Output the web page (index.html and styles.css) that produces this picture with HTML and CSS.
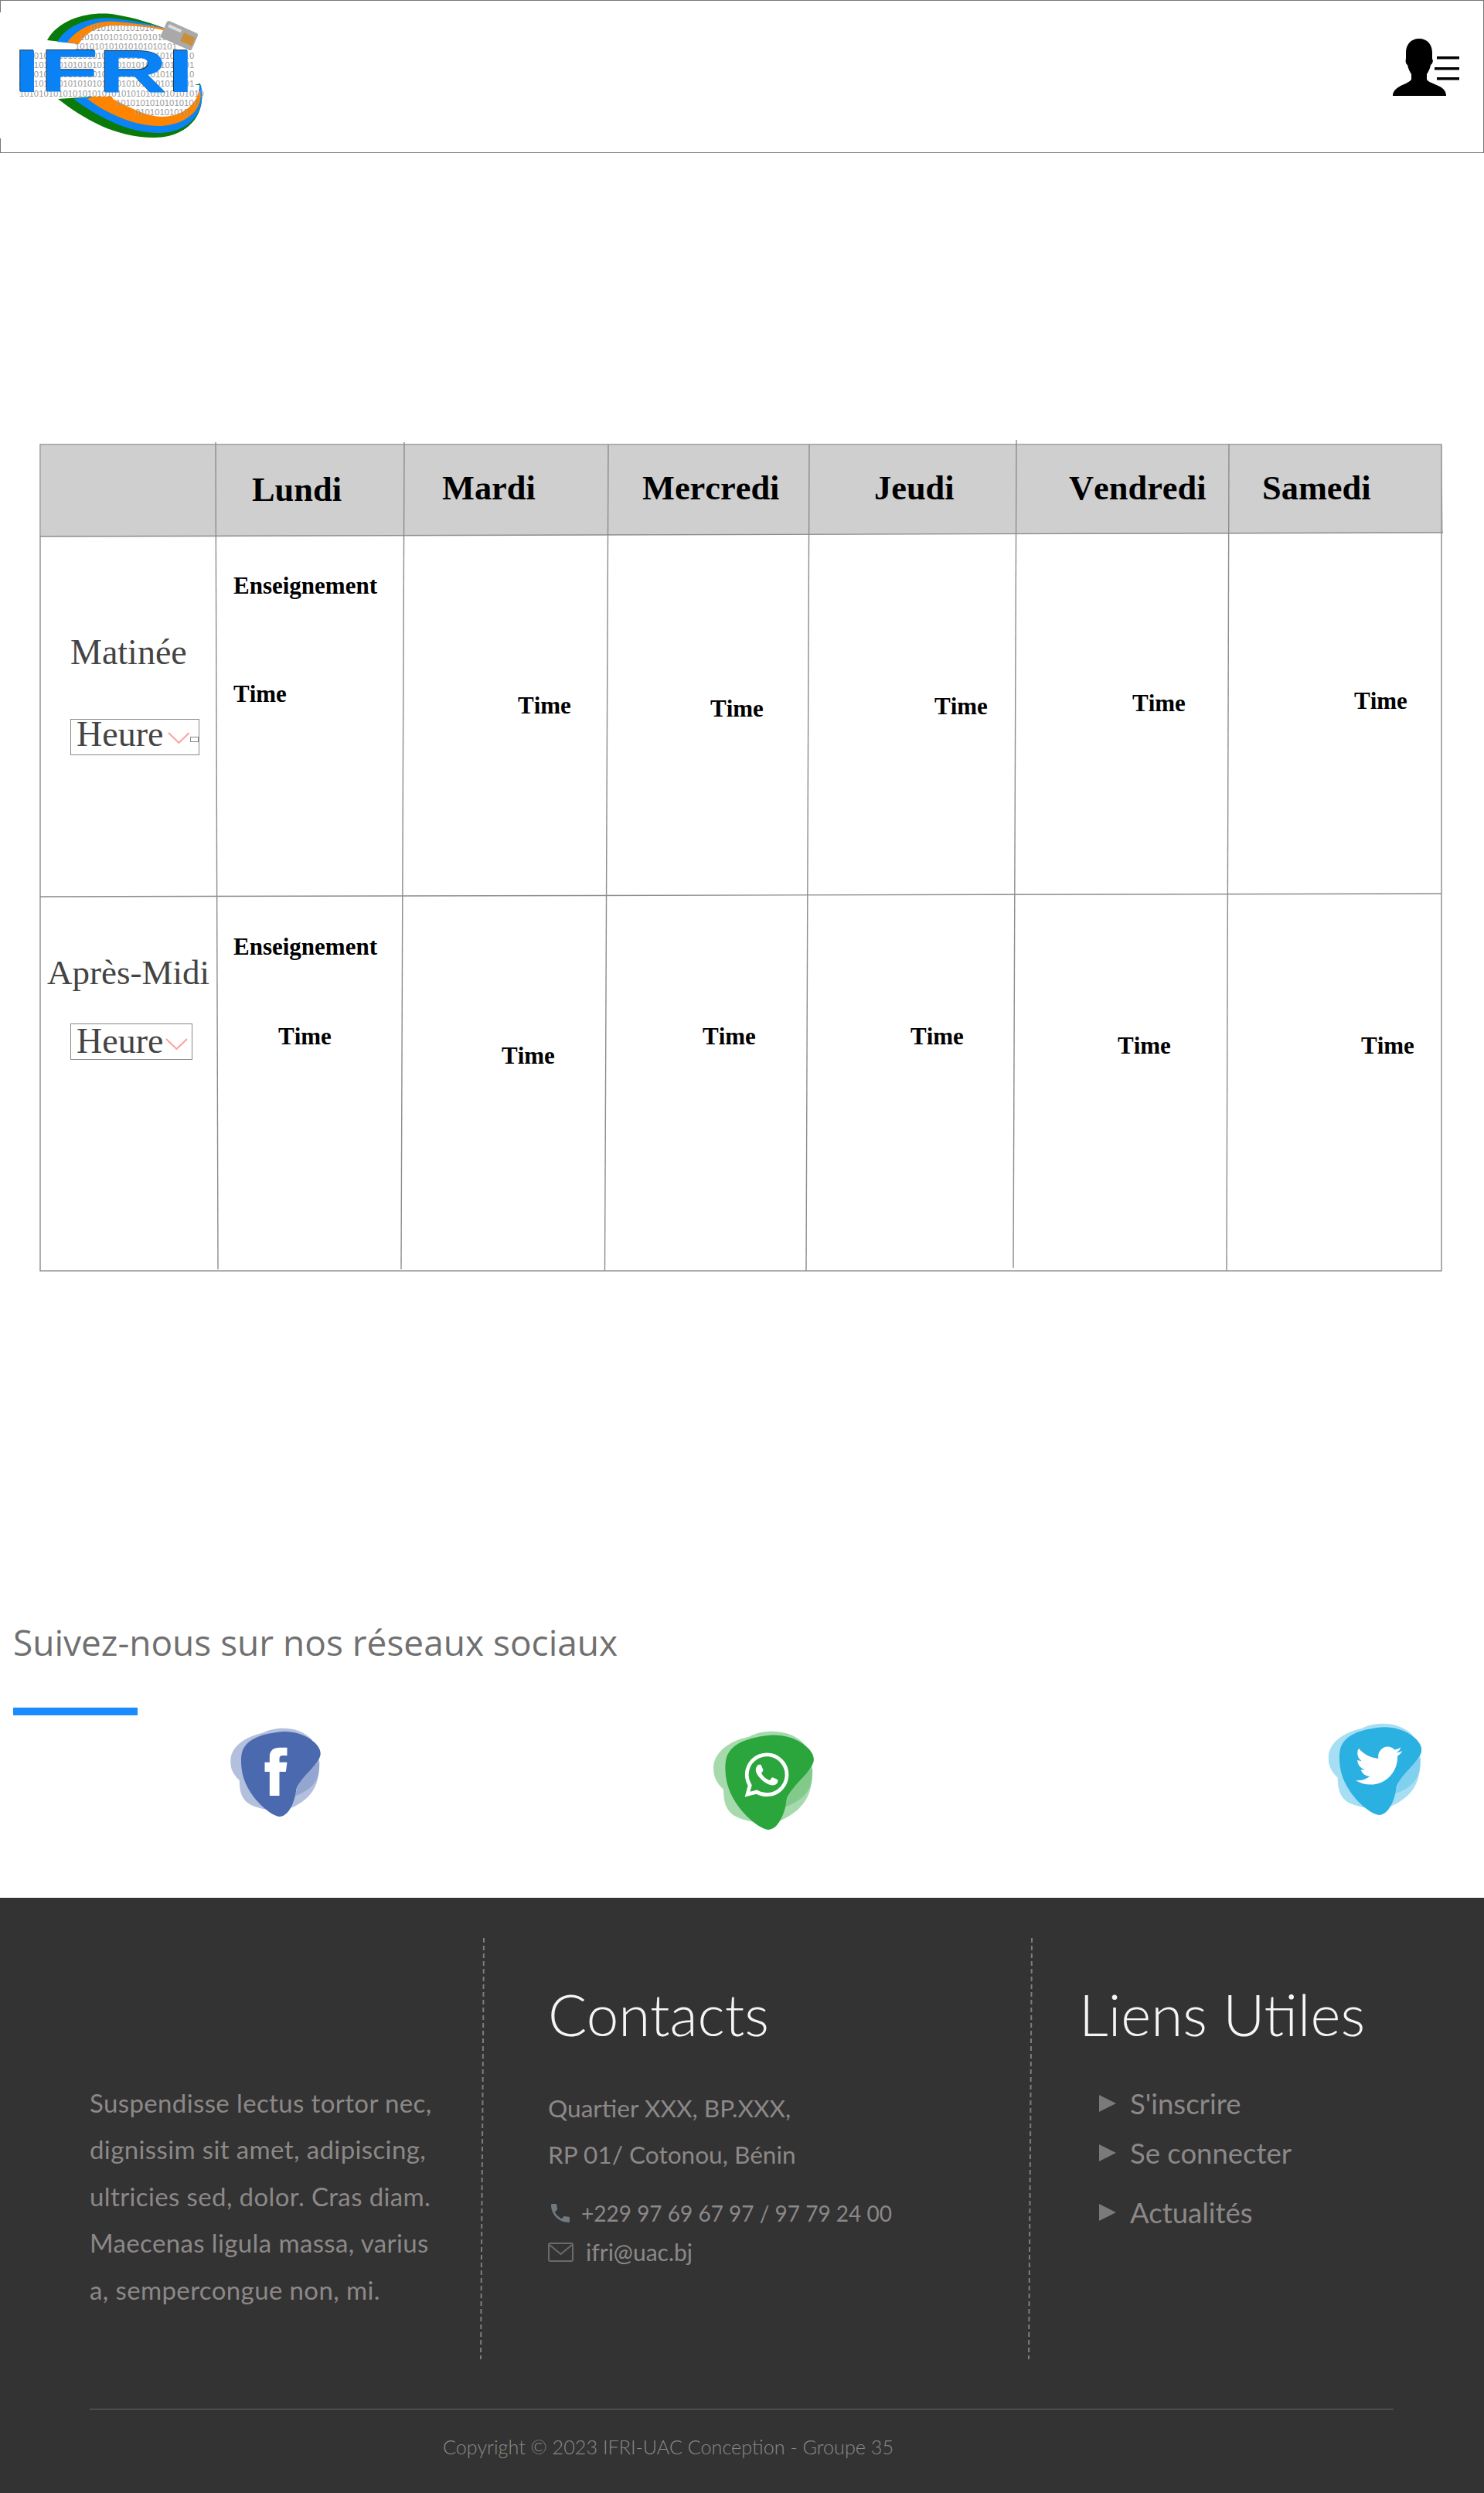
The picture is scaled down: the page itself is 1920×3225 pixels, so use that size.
FILE: index.html
```html
<!DOCTYPE html>
<html lang="fr">
<head>
  <meta charset="UTF-8">
  <meta name="viewport" content="width=device-width, initial-scale=1.0">
  <title>Emploi du temps - IFRI</title>
  <link rel="stylesheet" href="styles.css">
</head>
<body>

<svg class="defs" width="0" height="0">
  <symbol id="blob" viewBox="0 0 350 345">
    <path opacity="0.42" d="M0 130C0 75 55 35 125 20C170-5 265-10 315 45L345 130C345 200 335 260 250 305C200 330 130 322 80 300C40 280 35 240 35 205C10 180 0 160 0 130Z"/>
    <path opacity="0.3" d="M275 185L345 130C350 200 320 240 250 265Z"/>
    <path d="M45 95C60 45 120 22 205 15C280 12 350 60 350 100C350 140 270 190 255 240C250 290 225 345 190 345C150 340 60 260 45 170C40 140 40 115 45 95Z"/>
  </symbol>
</svg>

<header class="topbar">
  <svg class="logo" viewBox="0 16 280 163" width="280" height="163">
    <rect x="0" y="16" width="280" height="163" fill="#fff"/>
    <path fill="#0a7a0a" d="M61 52C78 22 120 14 150 19C175 23 195 30 215 37L150 62Z"/>
    <path fill="#0a84f5" d="M74 54C88 30 122 20 150 24C175 27 195 31 215 37L150 62Z"/>
    <path fill="#ff8400" d="M87 55C100 36 125 26 150 28C175 30 195 33 215 37L150 62Z"/>
    <path fill="#fff" d="M102 57C112 40 130 33 150 33C175 33 195 35 215 40L215 70L110 70Z"/>
    <path fill="#0a7a0a" d="M75 128C110 155 150 178 200 178C240 178 270 150 259 108L200 125L120 125Z"/>
    <path fill="#0a84f5" d="M95 128C125 150 165 172 205 172C240 172 268 150 260 110L200 125L120 125Z"/>
    <path fill="#ff8400" d="M113 128C140 148 175 163 205 163C235 163 264 145 259 118L200 125L120 125Z"/>
    <path fill="#fff" d="M146 128C170 140 190 151 210 151C235 151 258 135 258 110L200 110L140 110Z"/>
    <g class="bits">
      <text x="118" y="40">0101010101010</text>
      <text x="103" y="52">101010101010101010</text>
      <text x="97" y="64">101010101010101010101</text>
      <text x="25" y="76">101010101010101010101010101010101010</text>
      <text x="25" y="88">010101010101010101010101010101010101</text>
      <text x="25" y="100">101010101010101010101010101010101010</text>
      <text x="25" y="112">010101010101010101010101010101010101</text>
      <text x="25" y="125">10101010101010101010101010101010101010</text>
      <text x="150" y="137">10101010101010101</text>
      <text x="175" y="149">01010101010</text>
    </g>
    <g transform="rotate(24 232 46)">
      <rect x="210" y="34" width="44" height="24" rx="3" fill="#a9a9a9"/>
      <rect x="236" y="40" width="16" height="12" fill="#c98f3a"/>
      <rect x="214" y="38" width="18" height="4" fill="#dcdcdc"/>
    </g>
    <text class="logo-name" x="18" y="119" textLength="233" lengthAdjust="spacingAndGlyphs">IFRI</text>
  </svg>
  <svg class="user-menu" viewBox="0 0 90 78" width="90" height="78">
    <path d="M36 2C47 2 53 10 53 20L53 28C55 31 53 35 51 36C50 42 47 46 46 48L46 55C50 60 60 61 66 66C70 69 71 73 71 76L2 76C2 72 4 68 9 65C14 61 22 60 26 55L26 48C24 45 22 41 21 36C19 35 18 31 19 28L19 20C19 10 25 2 36 2Z"/>
    <rect x="59" y="25" width="29" height="3.5"/>
    <rect x="56" y="39" width="32" height="3.5"/>
    <rect x="59" y="52" width="29" height="3.5"/>
  </svg>
</header>

<main class="planning">
  <div class="schedule">
    <svg class="schedule-lines" viewBox="40 560 1840 1095" width="1840" height="1095">
      <polygon fill="#cfcfcf" points="53,576 1865,576 1867,689 53,694"/>
      <g stroke="#8c8c8c" stroke-width="1.4" fill="none">
        <rect x="52" y="575" width="1813" height="1069"/>
        <line x1="52" y1="694" x2="1867" y2="689"/>
        <line x1="52" y1="1160" x2="1865" y2="1156"/>
        <line x1="279" y1="572" x2="282" y2="1642"/>
        <line x1="523" y1="572" x2="519" y2="1642"/>
        <line x1="787" y1="575" x2="782.5" y2="1644"/>
        <line x1="1047" y1="575" x2="1043" y2="1644"/>
        <line x1="1315" y1="569" x2="1311" y2="1640"/>
        <line x1="1590" y1="574" x2="1587" y2="1644"/>
      </g>
    </svg>

    <div></div>
    <div class="day d-lundi">Lundi</div>
    <div class="day d-mardi">Mardi</div>
    <div class="day d-mercredi">Mercredi</div>
    <div class="day d-jeudi">Jeudi</div>
    <div class="day d-vendredi">Vendredi</div>
    <div class="day d-samedi">Samedi</div>

    <div class="period p-matin">
      <div class="period-name">Matinée</div>
      <div class="hour-select hs-matin">
        <span>Heure</span>
        <svg class="chevron" viewBox="0 0 29 15" width="29" height="15"><polyline points="1,1 14.5,14 28,1"/></svg>
        <i class="hs-handle"></i>
      </div>
    </div>
    <div class="slot s-lundi-1"><div class="course">Enseignement</div><div class="time">Time</div></div>
    <div class="slot s-mardi-1"><div class="time">Time</div></div>
    <div class="slot s-mercredi-1"><div class="time">Time</div></div>
    <div class="slot s-jeudi-1"><div class="time">Time</div></div>
    <div class="slot s-vendredi-1"><div class="time">Time</div></div>
    <div class="slot s-samedi-1"><div class="time">Time</div></div>

    <div class="period p-aprem">
      <div class="period-name">Après-Midi</div>
      <div class="hour-select hs-aprem">
        <span>Heure</span>
        <svg class="chevron" viewBox="0 0 29 15" width="29" height="15"><polyline points="1,1 14.5,14 28,1"/></svg>
      </div>
    </div>
    <div class="slot s-lundi-2"><div class="course">Enseignement</div><div class="time">Time</div></div>
    <div class="slot s-mardi-2"><div class="time">Time</div></div>
    <div class="slot s-mercredi-2"><div class="time">Time</div></div>
    <div class="slot s-jeudi-2"><div class="time">Time</div></div>
    <div class="slot s-vendredi-2"><div class="time">Time</div></div>
    <div class="slot s-samedi-2"><div class="time">Time</div></div>
  </div>
</main>

<section class="social">
  <h2 class="social-title">Suivez-nous sur nos réseaux sociaux</h2>
  <div class="social-bar"></div>
  <div class="social-icons">
    <svg class="soc soc-fb" viewBox="0 0 350 345" width="117" height="115">
      <use href="#blob"/>
      <path fill="#fff" d="M152 264V171H133V134H152V112C152 88 168 77 190 77H220V108H202C194 108 190 112 190 120V134H220L215 171H190V264Z"/>
    </svg>
    <svg class="soc soc-wa" viewBox="0 0 350 345" width="132" height="128">
      <use href="#blob"/>
      <path transform="translate(109 77) scale(6.4)" fill="#fff" d="M17.472 14.382c-.297-.149-1.758-.867-2.03-.967-.273-.099-.471-.148-.67.15-.197.297-.767.966-.94 1.164-.173.199-.347.223-.644.075-.297-.15-1.255-.463-2.39-1.475-.883-.788-1.48-1.761-1.653-2.059-.173-.297-.018-.458.13-.606.134-.133.298-.347.446-.52.149-.174.198-.298.298-.497.099-.198.05-.371-.025-.52-.075-.149-.669-1.612-.916-2.207-.242-.579-.487-.5-.669-.51-.173-.008-.371-.01-.57-.01-.198 0-.52.074-.792.372-.272.297-1.04 1.016-1.04 2.479 0 1.462 1.065 2.875 1.213 3.074.149.198 2.096 3.2 5.077 4.487.709.306 1.262.489 1.694.625.712.227 1.36.195 1.871.118.571-.085 1.758-.719 2.006-1.413.248-.694.248-1.289.173-1.413-.074-.124-.272-.198-.57-.347m-5.421 7.403h-.004a9.87 9.87 0 01-5.031-1.378l-.361-.214-3.741.982.998-3.648-.235-.374a9.86 9.86 0 01-1.51-5.26c.001-5.45 4.436-9.884 9.888-9.884 2.64 0 5.122 1.03 6.988 2.898a9.825 9.825 0 012.893 6.994c-.003 5.45-4.437 9.884-9.885 9.884m8.413-18.297A11.815 11.815 0 0012.05 0C5.495 0 .16 5.335.157 11.892c0 2.096.547 4.142 1.588 5.945L.057 24l6.305-1.654a11.882 11.882 0 005.683 1.448h.005c6.554 0 11.89-5.335 11.893-11.893a11.821 11.821 0 00-3.48-8.413z"/>
    </svg>
    <svg class="soc soc-tw" viewBox="0 0 350 345" width="124" height="119">
      <use href="#blob"/>
      <path transform="translate(102 72) scale(7.3)" fill="#fff" d="M23.95 4.57a10 10 0 01-2.825.775 4.958 4.958 0 002.163-2.723c-.951.555-2.005.959-3.127 1.184a4.92 4.92 0 00-8.384 4.482C7.69 8.095 4.067 6.13 1.64 3.162a4.822 4.822 0 00-.666 2.475c0 1.71.87 3.213 2.188 4.096a4.904 4.904 0 01-2.228-.616v.06a4.923 4.923 0 003.946 4.827 4.996 4.996 0 01-2.212.085 4.936 4.936 0 004.604 3.417 9.867 9.867 0 01-6.102 2.105c-.39 0-.779-.023-1.17-.067a13.995 13.995 0 007.557 2.209c9.053 0 13.998-7.496 13.998-13.985 0-.21 0-.42-.015-.63A9.935 9.935 0 0024 4.59z"/>
    </svg>
  </div>
</section>

<footer class="footer">
  <div class="footer-cols">
    <div class="foot-about">
      <p>Suspendisse lectus tortor nec,<br>dignissim sit amet, adipiscing,<br>ultricies sed, dolor. Cras diam.<br>Maecenas ligula massa, varius<br>a, sempercongue non, mi.</p>
    </div>
    <div class="foot-divider"></div>
    <div class="foot-contacts">
      <h3>Contacts</h3>
      <p class="address">Quartier XXX, BP.XXX,<br>RP 01/ Cotonou, Bénin</p>
      <div class="contact-line phone">
        <svg viewBox="0 0 24 24" width="32" height="32"><path d="M6.6 10.8c1.4 2.8 3.8 5.1 6.6 6.6l2.2-2.2c.3-.3.7-.4 1-.2 1.1.4 2.3.6 3.6.6.6 0 1 .4 1 1V20c0 .6-.4 1-1 1C10.6 21 3 13.4 3 4c0-.6.4-1 1-1h3.5c.6 0 1 .4 1 1 0 1.3.2 2.5.6 3.6.1.3 0 .7-.2 1z"/></svg>
        <span>+229 97 69 67 97 / 97 79 24 00</span>
      </div>
      <div class="contact-line mail">
        <svg viewBox="0 0 33 25" width="33" height="25"><rect x="1" y="1" width="31" height="23" rx="2"/><polyline points="2,3 16.5,15 31,3"/></svg>
        <span>ifri@uac.bj</span>
      </div>
    </div>
    <div class="foot-divider"></div>
    <div class="foot-links">
      <h3>Liens Utiles</h3>
      <ul>
        <li class="l-inscrire">S'inscrire</li>
        <li class="l-connecter">Se connecter</li>
        <li class="l-actu">Actualités</li>
      </ul>
    </div>
  </div>
  <div class="foot-rule"></div>
  <p class="copyright">Copyright © 2023 IFRI-UAC Conception - Groupe 35</p>
</footer>

</body>
</html>
```

FILE: styles.css
```css
html, body {
  margin: 0;
  padding: 0;
  background-color: #ffffff;
}
body {
  width: 1920px;
  font-family: "Lato", "Open Sans", sans-serif;
}
.defs {
  position: absolute;
}

/* top bar */
.topbar {
  display: flex;
  justify-content: space-between;
  align-items: flex-start;
  height: 198px;
  box-sizing: border-box;
  border: 1px solid #777;
}
.logo {
  margin: 15px 0 0 -1px;
}
.bits text {
  font-family: "Liberation Sans", sans-serif;
  font-size: 11.3px;
  fill: #9a9a9a;
}
.logo-name {
  font-family: "Liberation Sans", sans-serif;
  font-weight: bold;
  font-size: 78px;
  fill: #0a82f5;
  filter: drop-shadow(-1px -1px 0 #23384f);
}
.user-menu {
  margin: 47px 29px 0 0;
}

/* planning table */
.planning {
  padding: 377px 0 0 52px;
}
.schedule {
  position: relative;
  display: grid;
  grid-template-columns: 227px 244px 264px 260px 268px 275px 275px;
  grid-template-rows: 118px 467px 484px;
  width: 1813px;
  font-family: "Liberation Serif", serif;
  font-kerning: none;
  color: #000;
}
.schedule-lines {
  position: absolute;
  left: -12px;
  top: -15px;
}
.schedule > div {
  position: relative;
  box-sizing: border-box;
}
.day {
  font-weight: bold;
  font-size: 44.4px;
  line-height: 50px;
  padding-top: 31px;
}
.d-lundi { padding: 33px 0 0 47px; }
.d-mardi { padding-left: 49px; }
.d-mercredi { padding-left: 44px; }
.d-jeudi { padding-left: 84px; }
.d-vendredi { padding-left: 68px; }
.d-samedi { padding-left: 43px; }

.period {
  color: #444;
}
.period-name {
  font-size: 46px;
  line-height: 52px;
}
.p-matin { padding: 125px 0 0 39px; }
.p-aprem { padding: 72px 0 0 9px; }
.p-aprem .period-name { font-size: 45px; }

.hour-select {
  display: flex;
  align-items: flex-start;
  box-sizing: border-box;
  height: 47px;
  border: 1px solid #888;
  font-size: 46px;
  line-height: 37px;
  padding-left: 7px;
}
.hs-matin {
  width: 167px;
  margin-top: 60px;
}
.hs-aprem {
  width: 158px;
  margin: 40px 0 0 30px;
}
.chevron {
  fill: none;
  stroke: #ff9e9e;
  stroke-width: 2;
  margin: 16px 0 0 6px;
}
.hs-aprem span {
  padding-top: 3px;
}
.hs-aprem .chevron {
  margin: 18px 0 0 3px;
}
.hs-handle {
  box-sizing: border-box;
  width: 11px;
  height: 7px;
  margin-top: 22px;
  border: 1px solid #888;
}

.course, .time {
  font-weight: bold;
  font-size: 31px;
  line-height: 36px;
}
.s-lundi-1 { padding: 47px 0 0 23px; }
.s-lundi-1 .time { margin-top: 104px; }
.s-mardi-1 { padding: 202px 0 0 147px; }
.s-mercredi-1 { padding: 206px 0 0 132px; }
.s-jeudi-1 { padding: 203px 0 0 162px; }
.s-vendredi-1 { padding: 199px 0 0 150px; }
.s-samedi-1 { padding: 196px 0 0 162px; }
.s-lundi-2 { padding: 47px 0 0 23px; }
.s-lundi-2 .time { margin: 80px 0 0 58px; }
.s-mardi-2 { padding: 188px 0 0 126px; }
.s-mercredi-2 { padding: 163px 0 0 122px; }
.s-jeudi-2 { padding: 163px 0 0 131px; }
.s-vendredi-2 { padding: 175px 0 0 131px; }
.s-samedi-2 { padding: 175px 0 0 171px; }

/* social */
.social {
  padding: 450px 0 0 17px;
  height: 811px;
  box-sizing: border-box;
}
.social-title {
  margin: 0;
  font-family: "Open Sans", sans-serif;
  font-weight: 400;
  font-size: 46px;
  line-height: 60px;
  color: #707070;
}
.social-bar {
  width: 161px;
  height: 10px;
  margin-top: 55px;
  background-color: #1a8cff;
}
.social-icons {
  display: flex;
  align-items: flex-start;
  margin: 10px 0 0 281px;
}
.soc {
  fill: currentColor;
}
.soc-fb { margin-top: 6px; color: #4a69ae; }
.soc-wa { margin: 10px 0 0 507px; color: #2aa63c; }
.soc-tw { margin-left: 663px; color: #2bb0e2; }

/* footer */
.footer {
  height: 770px;
  box-sizing: border-box;
  padding-top: 52px;
  background-color: #333333;
  color: #8c8888;
  font-weight: 300;
}
.footer-cols {
  display: flex;
  height: 545px;
}
.foot-divider {
  width: 2px;
  height: 545px;
  background-image: repeating-linear-gradient(to bottom, #7d7d7d 0, #7d7d7d 6px, transparent 6px, transparent 10px);
  transform: rotate(0.42deg);
}
.foot-about {
  width: 507px;
  padding: 183px 0 0 116px;
}
.foot-about p {
  margin: 0;
  font-weight: 400;
  font-size: 33px;
  letter-spacing: 0.38px;
  line-height: 60.4px;
  white-space: nowrap;
}
.foot-contacts {
  width: 707px;
  box-sizing: border-box;
  padding: 55px 0 0 84px;
}
.foot-links {
  padding: 55px 0 0 62px;
}
.footer h3 {
  margin: 0;
  font-weight: 300;
  font-size: 74.6px;
  line-height: 86px;
  color: #f5f5f5;
}
.address {
  margin: 49px 0 0;
  font-weight: 400;
  font-size: 31.6px;
  line-height: 60px;
  white-space: nowrap;
}
.contact-line {
  display: flex;
  align-items: center;
  font-weight: 400;
  line-height: 40px;
}
.contact-line svg {
  flex: none;
}
.phone {
  margin-top: 26px;
  font-size: 28px;
}
.phone svg {
  fill: #6f7a80;
  margin-right: 11px;
}
.mail {
  margin-top: 10px;
  font-size: 30px;
}
.mail svg {
  fill: none;
  stroke: #6a6a6a;
  stroke-width: 2;
  margin-right: 16px;
}
.foot-links ul {
  list-style: none;
  margin: 0;
  padding: 0;
}
.foot-links li {
  position: relative;
  padding-left: 66px;
  font-weight: 400;
  font-size: 36.5px;
  line-height: 40px;
}
.foot-links li::before {
  content: "";
  position: absolute;
  left: 26px;
  top: 9px;
  border-left: 22px solid #7a7a7a;
  border-top: 11px solid transparent;
  border-bottom: 11px solid transparent;
}
.l-inscrire { margin-top: 53px; }
.l-connecter { margin-top: 24px; }
.l-actu { margin-top: 37px; }
.foot-rule {
  height: 1px;
  margin: 64px 117px 0 116px;
  background-color: #666;
}
.copyright {
  margin: 28px 0 0 573px;
  font-size: 25.2px;
  line-height: 40px;
  color: #8a8a8a;
}
```
